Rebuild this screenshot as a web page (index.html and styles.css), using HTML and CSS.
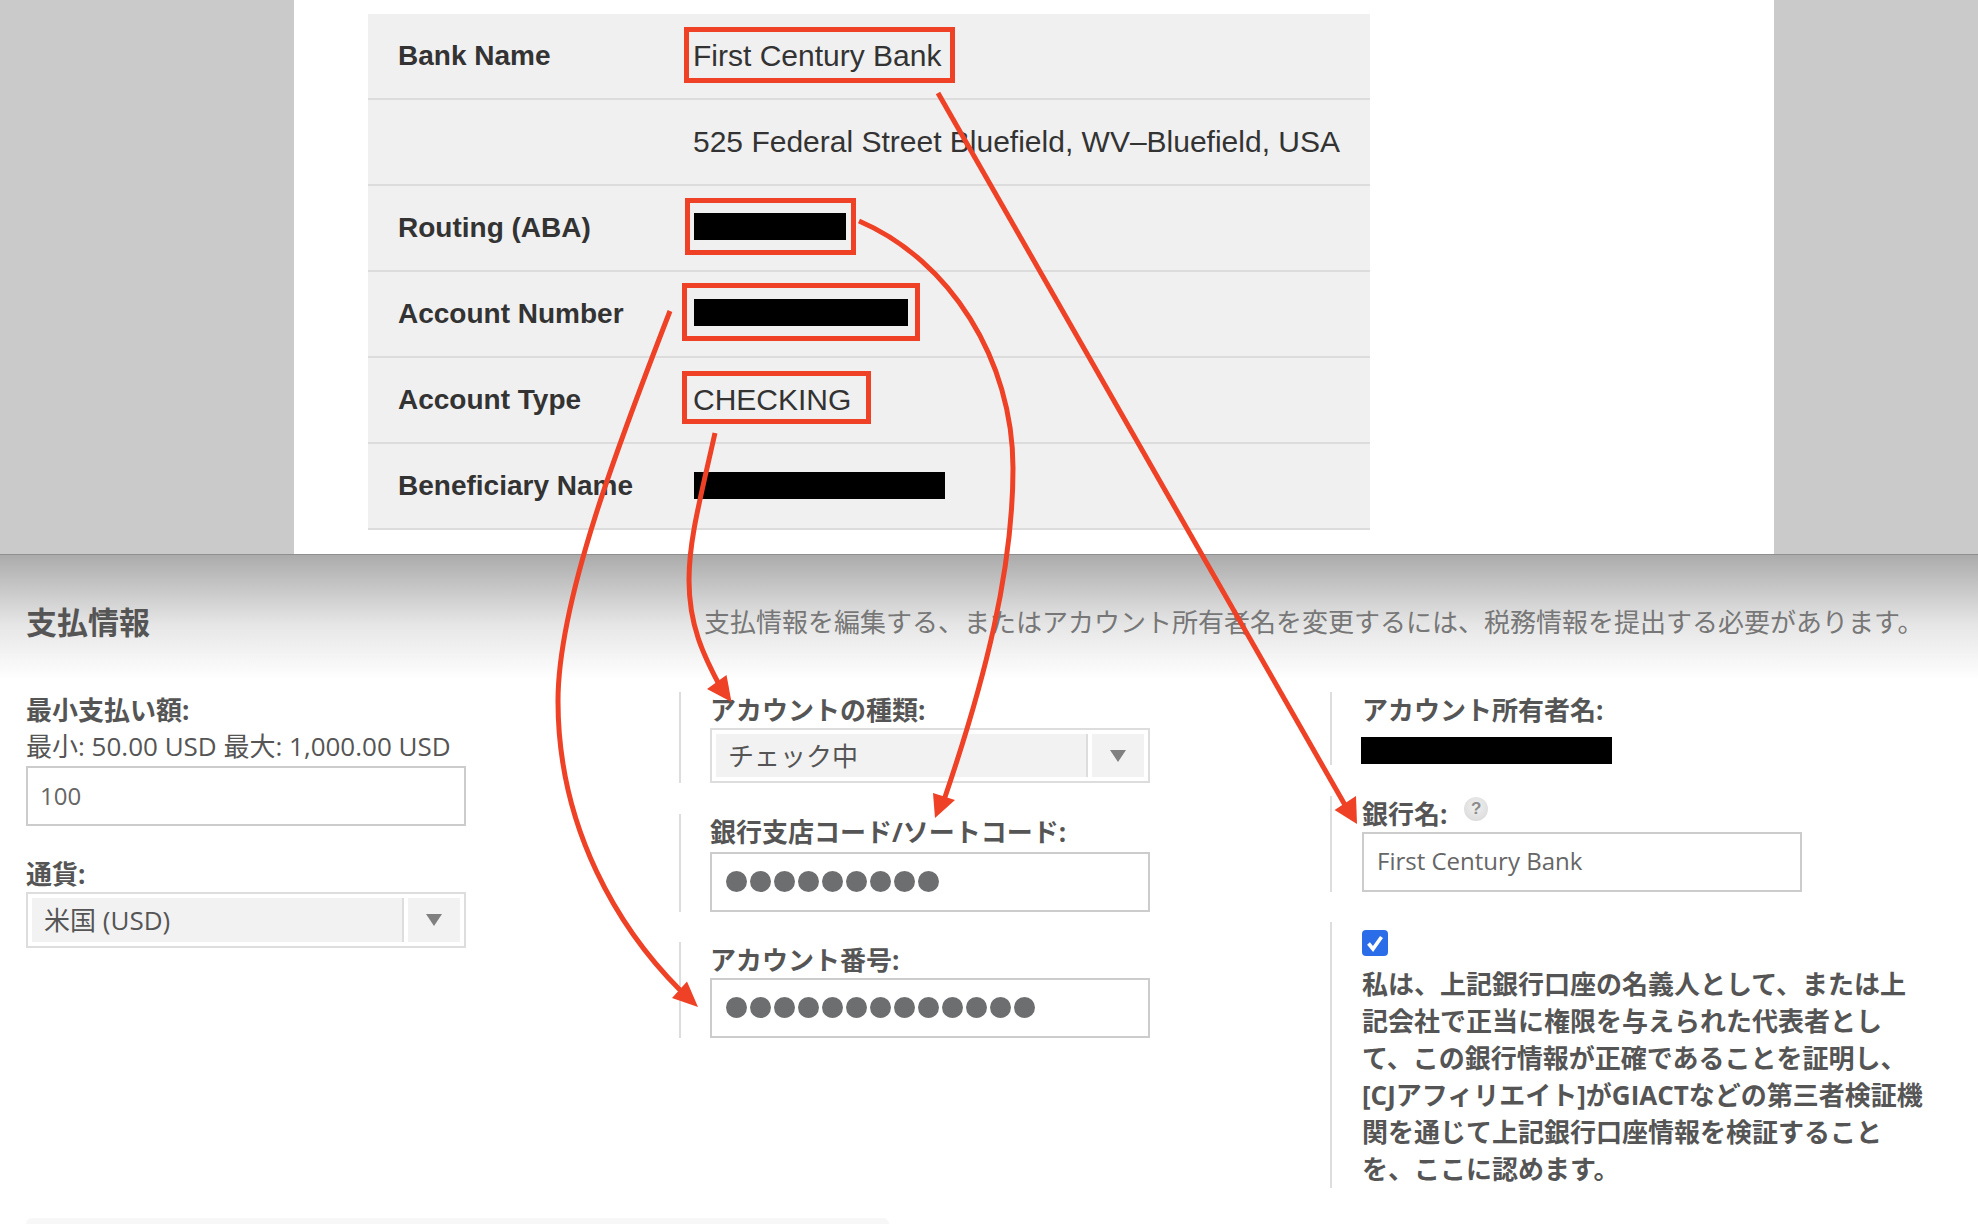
FILE: index.html
```html
<!DOCTYPE html>
<html lang="ja">
<head>
<meta charset="utf-8">
<title>支払情報</title>
<link rel="stylesheet" href="styles.css">
</head>
<body>
<div class="page">
  <section class="shot-top">
    <div class="sheet">
      <div class="bank-table">
        <div class="row"><div class="key">Bank Name</div><div class="val">First Century Bank</div></div>
        <div class="row"><div class="key"></div><div class="val">525 Federal Street Bluefield, WV–Bluefield, USA</div></div>
        <div class="row"><div class="key">Routing (ABA)</div><div class="val"><span class="redact r-routing"></span></div></div>
        <div class="row"><div class="key">Account Number</div><div class="val"><span class="redact r-account"></span></div></div>
        <div class="row"><div class="key">Account Type</div><div class="val">CHECKING</div></div>
        <div class="row"><div class="key">Beneficiary Name</div><div class="val"><span class="redact r-benef"></span></div></div>
      </div>
    </div>
  </section>
  <section class="shot-bottom">
    <div class="head">
      <h2 class="title">支払情報</h2>
      <p class="desc">支払情報を編集する、またはアカウント所有者名を変更するには、税務情報を提出する必要があります。</p>
    </div>
    <div class="cols">
      <div class="col col-left">
        <div class="label">最小支払い額:</div>
        <div class="hint">最小: 50.00 USD 最大: 1,000.00 USD</div>
        <div class="input input-amount">100</div>
        <div class="label label-currency">通貨:</div>
        <div class="select"><span class="sel-text">米国 (USD)</span><span class="sel-btn"><i class="tri"></i></span></div>
      </div>
      <div class="col col-mid">
        <div class="field f-type">
          <div class="label">アカウントの種類:</div>
          <div class="select"><span class="sel-text">チェック中</span><span class="sel-btn"><i class="tri"></i></span></div>
        </div>
        <div class="field f-sort">
          <div class="label">銀行支店コード/ソートコード:</div>
          <div class="input input-dots"><i class="dot"></i><i class="dot"></i><i class="dot"></i><i class="dot"></i><i class="dot"></i><i class="dot"></i><i class="dot"></i><i class="dot"></i><i class="dot"></i></div>
        </div>
        <div class="field f-acct">
          <div class="label">アカウント番号:</div>
          <div class="input input-dots"><i class="dot"></i><i class="dot"></i><i class="dot"></i><i class="dot"></i><i class="dot"></i><i class="dot"></i><i class="dot"></i><i class="dot"></i><i class="dot"></i><i class="dot"></i><i class="dot"></i><i class="dot"></i><i class="dot"></i></div>
        </div>
      </div>
      <div class="col col-right">
        <div class="field f-owner">
          <div class="label">アカウント所有者名:</div>
          <span class="redact r-owner"></span>
        </div>
        <div class="field f-bank">
          <div class="label label-help">銀行名: <span class="help">?</span></div>
          <div class="input input-text">First Century Bank</div>
        </div>
        <div class="field f-agree">
          <span class="check"><svg viewBox="0 0 26 26" width="26" height="26"><path d="M6.5 13.5l4.5 5.5 8.5-12" fill="none" stroke="#fff" stroke-width="3.6"/></svg></span>
          <p class="agree">私は、上記銀行口座の名義人として、または上記会社で正当に権限を与えられた代表者として、この銀行情報が正確であることを証明し、[CJアフィリエイト]がGIACTなどの第三者検証機関を通じて上記銀行口座情報を検証することを、ここに認めます。</p>
        </div>
      </div>
    </div>
    <div class="next-panel"></div>
  </section>
  <svg class="annotations" width="1978" height="1224" viewBox="0 0 1978 1224">
    <g class="boxes">
      <rect x="686.5" y="29.5" width="266" height="51"/>
      <rect x="687.5" y="200.5" width="166" height="52"/>
      <rect x="684.5" y="285.5" width="233" height="53"/>
      <rect x="684.5" y="373.5" width="184" height="48"/>
    </g>
    <g class="lines">
      <path d="M938 93L1345 805"/>
      <path d="M859 221C950 260 1013 360 1013 468C1013 570 985 680 944 800"/>
      <path d="M670 311C620 440 558 600 558 701C558 830 620 930 680 990"/>
      <path d="M715 433C700 500 689 540 689 580C689 625 703 655 722 690"/>
    </g>
    <g class="heads">
      <polygon points="1357,824 1356,796 1334.6,810"/>
      <polygon points="935,818 933,793 955,800"/>
      <polygon points="698,1007 687,981.5 672,998"/>
      <polygon points="731.5,702 726.5,675 707,689"/>
    </g>
  </svg>
</div>
</body>
</html>
```

FILE: styles.css
```css
* { box-sizing: border-box; }
html, body { margin: 0; padding: 0; background: #fff; }
.page { position: relative; width: 1978px; height: 1224px; overflow: hidden; }

.shot-top { height: 554px; background: #cacaca; padding: 0 204px 0 294px; }
.sheet { height: 100%; background: #fff; padding: 14px 404px 0 74px; }
.bank-table { background: #f0f0f0; font-family: "Liberation Sans", Arial, sans-serif; color: #333; }
.row { display: flex; align-items: center; height: 86px; border-bottom: 2px solid #dcdcdc; }
.key { width: 325px; padding-left: 30px; font-size: 28px; font-weight: 700; }
.val { font-size: 30px; white-space: nowrap; }
.redact { display: block; background: #000; height: 27px; }
.r-routing { width: 152px; margin: -4px 0 0 1px; }
.r-account { width: 214px; margin: -4px 0 0 1px; }
.r-benef { width: 251px; margin: -2px 0 0 1px; }

.shot-bottom {
  height: 670px;
  border-top: 1px solid #8f8f8f;
  background: linear-gradient(#ababab 0, #e6e6e6 70px, #fff 125px);
  font-family: "Open Sans", "Noto Sans CJK JP", sans-serif;
  color: #555;
  position: relative;
}
.head { display: flex; align-items: center; height: 134px; padding-left: 26px; }
.title { margin: 0; width: 678px; font-size: 31px; font-weight: 700; line-height: 1; }
.desc { margin: 0; font-size: 26px; color: #777; white-space: nowrap; line-height: 1; }

.cols { display: flex; margin-top: 3px; }
.col-left { width: 679px; padding-left: 26px; }
.col-mid { width: 651px; }
.col-right { flex: 1; }

.label { font-size: 26px; font-weight: 700; line-height: 36px; white-space: nowrap; }
.hint { font-size: 26px; line-height: 36px; margin-bottom: 2px; white-space: nowrap; }
.label-currency { margin-top: 30px; }

.input {
  display: flex; align-items: center; width: 440px; height: 60px;
  border: 2.5px solid #ccc; background: #fff; padding-left: 13px;
  font-size: 24px; color: #666;
}
.input-amount { padding: 0 0 2px 12px; }
.select {
  display: flex; width: 440px; height: 56px; padding: 4px;
  border: 2px solid #ddd; background: #fff; color: #555; font-size: 26px;
}
.sel-text { display: flex; align-items: center; flex: 1; background: #f2f2f2; padding: 0 0 2px 12px; }
.sel-btn {
  display: flex; align-items: center; justify-content: center; width: 58px;
  background: #f2f2f2; border-left: 2px solid #ddd; box-shadow: inset 4px 0 0 #fff;
}
.tri { display: block; width: 0; height: 0; border-left: 8px solid transparent; border-right: 8px solid transparent; border-top: 12px solid #808080; margin-left: 4px; }

.field { border-left: 2px solid #ddd; padding-left: 29px; }
.f-type { height: 91px; }
.f-sort { height: 98px; margin-top: 31px; }
.f-acct { height: 96px; margin-top: 30px; }
.f-type .select { height: 55px; }
.f-sort .label { height: 38px; line-height: 36px; }
.input-dots { gap: 3px; padding: 0 0 2px 14px; }
.dot { display: block; width: 21px; height: 21px; border-radius: 50%; background: #6d6e70; }

.col-right .field { padding-left: 30px; }
.f-owner { height: 73px; }
.f-bank { height: 96px; margin-top: 31px; }
.f-agree { height: 266px; margin-top: 30px; padding-top: 8px; }
.f-owner .label { height: 45px; }
.r-owner { width: 251px; margin: 0 0 0 -1px; }
.label-help { height: 36px; }
.help {
  display: inline-flex; align-items: center; justify-content: center; vertical-align: 10px;
  width: 24px; height: 24px; margin-left: 10px; border-radius: 50%;
  background: radial-gradient(circle at 50% 40%, #f0f0f0 0, #dedede 70%, #d0d0d0 100%);
  color: #8c8c8c; font: 700 17px "Liberation Sans", sans-serif;
}
.input-text { color: #666; padding: 0 0 3px 13px; }
.check { display: block; width: 26px; height: 26px; background: #2b6de8; border-radius: 4px; }
.check svg { display: block; }
.agree { margin: 10px 0 0; width: 568px; font-size: 26px; font-weight: 700; line-height: 37px; }

.next-panel { position: absolute; left: 26px; top: 663px; width: 863px; height: 7px; background: #f7f7f7; border-radius: 6px 6px 0 0; }

.annotations { position: absolute; left: 0; top: 0; pointer-events: none; }
.boxes rect { fill: none; stroke: #ee4125; stroke-width: 5; }
.lines path { fill: none; stroke: #ee4125; stroke-width: 5; }
.heads polygon { fill: #ee4125; }
```
